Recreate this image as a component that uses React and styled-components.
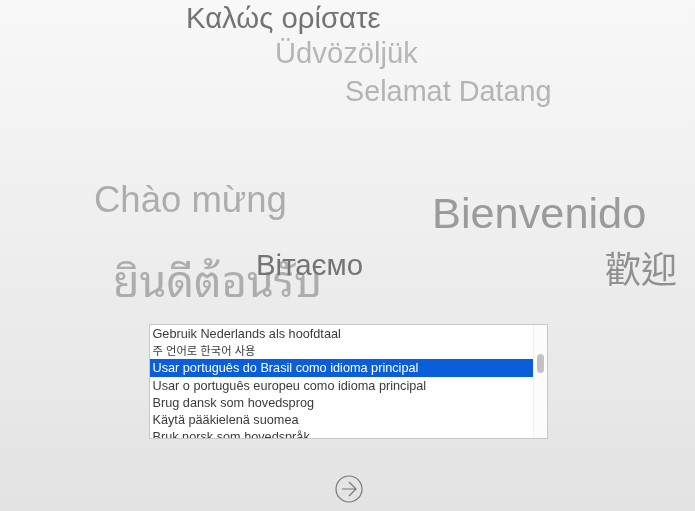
import React from "react";
import styled, { createGlobalStyle } from "styled-components";

const Global = createGlobalStyle`
  html, body { margin: 0; padding: 0; }
  body { font-family: "Liberation Sans", Arial, sans-serif; }
`;

const Screen = styled.div`
  position: relative;
  width: 695px;
  height: 511px;
  overflow: hidden;
  background: linear-gradient(180deg, #f8f8f8 0%, #e3e3e3 100%);
  display: flex;
  flex-direction: column;
  align-items: center;
`;

const Greetings = styled.div`
  align-self: stretch;
  height: 324px;
  flex: none;
`;

const Greeting = styled.span`
  position: absolute;
  left: ${(p) => p.$x}px;
  top: ${(p) => p.$y}px;
  font-size: ${(p) => p.$size}px;
  line-height: 1;
  white-space: nowrap;
  color: ${(p) => p.$color};
  font-family: ${(p) => p.$font || `"Liberation Sans", "Noto Sans", sans-serif`};
  font-weight: 400;
  filter: blur(0.3px);
`;

const ListBox = styled.div`
  width: 399px;
  height: 115px;
  box-sizing: border-box;
  flex: none;
  margin-left: 1px;
  border: 1px solid #c8c8c8;
  background: #fff;
  display: flex;
  overflow: hidden;
`;

const Rows = styled.ul`
  list-style: none;
  margin: 0;
  padding: 0;
  flex: 1;
  min-width: 0;
`;

const Row = styled.li`
  height: 17.2px;
  line-height: 18.6px;
  padding-left: 3px;
  font-size: ${(p) => (p.$cjk ? "11.3px" : "12.7px")};
  white-space: nowrap;
  color: ${(p) => (p.$selected ? "#fff" : "#3a3a3a")};
  background: ${(p) => (p.$selected ? "#0a5fd8" : "transparent")};
  font-family: "Liberation Sans", "Noto Sans CJK KR", sans-serif;
  filter: blur(0.2px);
`;

const Track = styled.div`
  width: 14px;
  flex: none;
  border-left: 1px solid #f0f0f0;
  background: #fcfcfc;
  padding: 29px 0 0 3px;
  box-sizing: border-box;
`;

const Thumb = styled.div`
  width: 7px;
  height: 19px;
  border-radius: 4px;
  background: #c2c2c2;
`;

const NextButton = styled.button`
  flex: none;
  margin: 36px 0 0 3px;
  padding: 0;
  width: 28px;
  height: 28px;
  border: 0;
  background: none;
  display: block;
`;

const greetings = [
  { t: "Καλώς ορίσατε", x: 186, y: 3, s: 29.3, c: "#737373" },
  { t: "Üdvözöljük", x: 275, y: 39, s: 29.2, c: "#b6b6b6" },
  { t: "Selamat Datang", x: 345, y: 77, s: 28.8, c: "#b4b4b4" },
  { t: "Chào mừng", x: 94, y: 182, s: 36.5, c: "#adadad" },
  { t: "Bienvenido", x: 432, y: 192, s: 43.3, c: "#9b9b9b" },
  { t: "ยินดีต้อนรับ", x: 113, y: 256, s: 43.2, c: "#adadad", f: `"Noto Sans Thai Looped", "Noto Sans Thai", "Noto Sans", "DejaVu Sans", sans-serif` },
  { t: "Вітаємо", x: 256, y: 250, s: 29.4, c: "#747474" },
  { t: "歡迎", x: 605, y: 249, s: 36, c: "#909090", f: `"Noto Sans CJK TC", sans-serif` },
];

const languages = [
  { label: "Gebruik Nederlands als hoofdtaal" },
  { label: "주 언어로 한국어 사용", cjk: true },
  { label: "Usar português do Brasil como idioma principal", selected: true },
  { label: "Usar o português europeu como idioma principal" },
  { label: "Brug dansk som hovedsprog" },
  { label: "Käytä pääkielenä suomea" },
  { label: "Bruk norsk som hovedspråk" },
];

export default function App() {
  return (
    <Screen>
      <Global />
      <Greetings>
        {greetings.map((g) => (
          <Greeting key={g.t} $x={g.x} $y={g.y} $size={g.s} $color={g.c} $font={g.f}>
            {g.t}
          </Greeting>
        ))}
      </Greetings>
      <ListBox>
        <Rows>
          {languages.map((l) => (
            <Row key={l.label} $selected={l.selected} $cjk={l.cjk}>{l.label}</Row>
          ))}
        </Rows>
        <Track><Thumb /></Track>
      </ListBox>
      <NextButton aria-label="Continue">
        <svg width="28" height="28" viewBox="0 0 28 28" fill="none" stroke="#777">
          <circle cx="14" cy="14" r="13" strokeWidth="1.2" />
          <path d="M7 14H21M14 7L21 14L14 21" strokeWidth="1.2" />
        </svg>
      </NextButton>
    </Screen>
  );
}
